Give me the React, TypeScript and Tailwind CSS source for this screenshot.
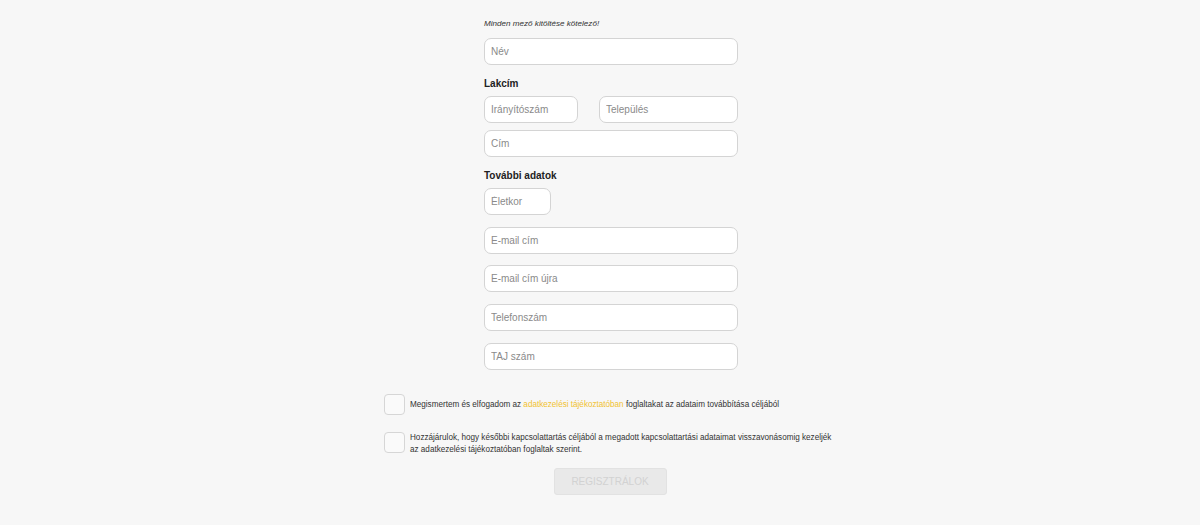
import React from 'react';

function Field({ placeholder, className = '' }: { placeholder: string; className?: string }) {
  return (
    <input
      type="text"
      placeholder={placeholder}
      className={`block h-[27px] rounded-[7px] border border-[#d4d4d4] bg-white px-[6px] text-[10px] leading-[16px] text-[#333] placeholder:text-[#8a8a8a] outline-none ${className}`}
    />
  );
}

function Check() {
  return <span className="block h-[21px] w-[21px] shrink-0 rounded-[4px] border border-[#d6d6d6] bg-[#fafafa]" />;
}

export default function App() {
  return (
    <div className="min-h-[525px] w-full bg-[#f7f7f7] font-['Liberation_Sans',Arial,sans-serif] text-[#222]">
      <div className="ml-[384px] w-[452px] pt-[18px]">
        <div className="ml-[100px] w-[254px]">
          <p className="text-[8.1px] italic leading-[12px] text-[#333]">Minden mező kitöltése kötelező!</p>
          <Field placeholder="Név" className="mt-[8px] w-full" />

          <h3 className="mt-[13px] text-[10px] font-bold leading-[12px]">Lakcím</h3>
          <div className="mt-[6px] flex justify-between">
            <Field placeholder="Irányítószám" className="w-[94px]" />
            <Field placeholder="Település" className="w-[139px]" />
          </div>
          <Field placeholder="Cím" className="mt-[7px] w-full" />

          <h3 className="mt-[13px] text-[10px] font-bold leading-[12px]">További adatok</h3>
          <Field placeholder="Életkor" className="mt-[6px] w-[67px]" />
          <Field placeholder="E-mail cím" className="mt-[12px] w-full" />
          <Field placeholder="E-mail cím újra" className="mt-[11px] w-full" />
          <Field placeholder="Telefonszám" className="mt-[12px] w-full" />
          <Field placeholder="TAJ szám" className="mt-[12px] w-full" />
        </div>

        <label className="mt-[24px] flex items-center gap-[5px]">
          <Check />
          <span className="text-[8.15px] leading-[12px] text-[#333]">
            Megismertem és elfogadom az{' '}
            <span className="text-[#f1c232]">adatkezelési tájékoztatóban</span> foglaltakat az adataim
            továbbítása céljából
          </span>
        </label>

        <label className="mt-[17px] flex items-start gap-[5px]">
          <Check />
          <span className="w-[424px] text-[8.15px] leading-[12px] text-[#333]">
            Hozzájárulok, hogy későbbi kapcsolattartás céljából a megadott kapcsolattartási adataimat
            visszavonásomig kezeljék az adatkezelési tájékoztatóban foglaltak szerint.
          </span>
        </label>

        <button
          disabled
          className="mx-auto mt-[12px] block h-[27px] w-[113px] rounded-[3px] border border-[#e2e2e2] bg-[#e9e9e9] text-[10px] text-[#d2d2d2]"
        >
          REGISZTRÁLOK
        </button>
      </div>
    </div>
  );
}
